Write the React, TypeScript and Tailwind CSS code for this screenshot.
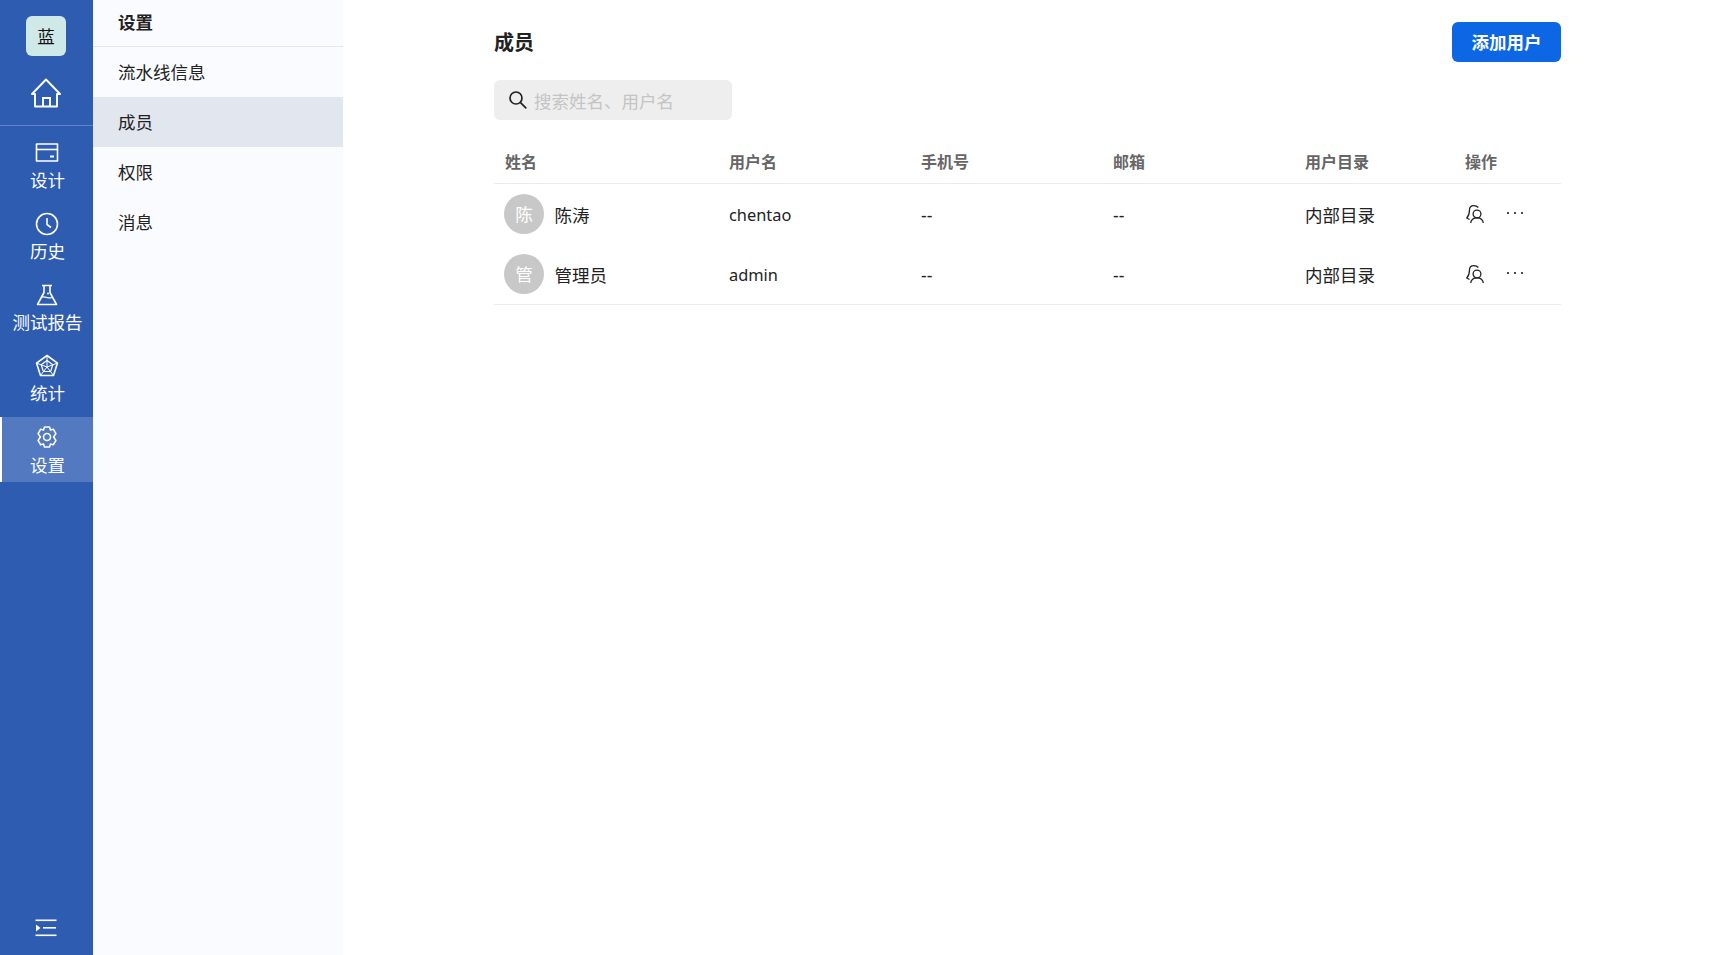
import type { ReactNode } from "react";

const font = { fontFamily: '"Noto Sans", "Noto Sans CJK SC", sans-serif' };

function Icon({ children }: { children: ReactNode }) {
  return (
    <svg
      viewBox="0 0 24 24"
      fill="none"
      stroke="currentColor"
      strokeWidth="1.6"
      strokeLinejoin="round"
      className="-ml-0.5 h-6 w-6"
    >
      {children}
    </svg>
  );
}

const navItems: { label: string; icon: ReactNode; active?: boolean }[] = [
  {
    label: "设计",
    icon: (
      <Icon>
        <rect x="1.500" y="3" width="21" height="17" />
        <path d="M1.500 8.500h21" />
        <path d="M15 15.500h4" strokeWidth="2" />
      </Icon>
    ),
  },
  {
    label: "历史",
    icon: (
      <Icon>
        <circle cx="12" cy="12" r="10.500" />
        <path d="M12 6v6.500l4 3" />
      </Icon>
    ),
  },
  {
    label: "测试报告",
    icon: (
      <Icon>
        <path d="M7 2.500h10M9 2.500v7L2.500 21.500h19L15 9.500v-7" />
        <path d="M6 14.500c4-2 6 1.500 12 0" strokeWidth="1.200" />
        <circle cx="13" cy="10.500" r="1" fill="currentColor" stroke="none" />
      </Icon>
    ),
  },
  {
    label: "统计",
    icon: (
      <Icon>
        <path d="M12 1.500l10.500 7.600-4 12.400h-13l-4-12.400z" />
        <path d="M12 6.500l5.800 4.200-2.200 6.800H8.400l-2.200-6.800z" strokeWidth="1.200" />
        <path d="M12 1.500V13M22.500 9.100L12 13M18.500 21.500L12 13M5.500 21.500L12 13M1.500 9.100L12 13" strokeWidth="1" />
      </Icon>
    ),
  },
  {
    label: "设置",
    active: true,
    icon: (
      <Icon>
        <path d="M9.500 2h5l1 3 2.800-.8 2.600 4.400L18.600 12l2.300 3.400-2.600 4.400-2.800-.8-1 3h-5l-1-3-2.800.8-2.600-4.400L5.400 12 3.100 8.600l2.600-4.400 2.800.8z" />
        <circle cx="12" cy="12" r="3.500" />
      </Icon>
    ),
  },
];

const subItems = ["流水线信息", "成员", "权限", "消息"];

const members = [
  { initial: "陈", name: "陈涛", username: "chentao" },
  { initial: "管", name: "管理员", username: "admin" },
];

function UsersIcon() {
  return (
    <svg viewBox="0 0 18 18" fill="none" stroke="#222" strokeWidth="1.300" className="ml-px h-[18px] w-[18px]">
      <circle cx="11" cy="9" r="3.900" />
      <path d="M4.700 18c.4-3.300 3-5.200 6.300-5.200s5.900 1.900 6.300 5.200" />
      <path d="M12.300 2.500C11.300 1.300 9.600.700 7.800.700 5.500.700 3.500 2.200 3.500 5c0 3-.5 5.500-2.700 8l2.700 1.500" />
    </svg>
  );
}

export default function App() {
  return (
    <div className="flex h-[955px] w-full overflow-hidden bg-white text-[17.5px] text-[#222]" style={font}>
      <aside className="flex w-[93px] shrink-0 flex-col bg-[#2e5cb0] text-white">
        <div className="flex h-[126px] flex-col items-center border-b border-white/25 pt-4">
          <div className="-ml-px flex h-10 w-10 items-center justify-center rounded-md bg-[#cfe9e9] text-[17.5px] text-[#111]">
            蓝
          </div>
          <svg viewBox="0 0 30 30" fill="none" stroke="currentColor" strokeWidth="1.900" className="mt-[22px] -ml-px h-[30px] w-[30px]">
            <path d="M1 16L15 1.500 29 16h-3v12.500H4V16z" strokeLinejoin="round" />
            <path d="M12 28.500V20h7v8.500" />
          </svg>
        </div>
        <nav className="mt-[7px] flex flex-col gap-[6px]">
          {navItems.map((item) => (
            <div
              key={item.label}
              className={`flex h-[65px] flex-col items-center border-l-2 pt-[8px] ${
                item.active ? "border-white bg-[#537ac0]" : "border-transparent"
              }`}
            >
              {item.icon}
              <span className={`text-[17.5px] leading-[24px] whitespace-nowrap ${item.active ? "mt-[4px]" : "mt-[3px]"}`}>
                {item.label}
              </span>
            </div>
          ))}
        </nav>
        <div className="mt-auto flex h-[50px] items-start justify-center pt-[14px]">
          <svg viewBox="0 0 22 18" fill="currentColor" className="-ml-0.5 h-[18px] w-[22px]">
            <rect x="0.500" y="0.500" width="21" height="1.600" />
            <rect x="8" y="8" width="13" height="1.600" />
            <rect x="0.500" y="15.500" width="21" height="1.600" />
            <path d="M1 5.500l4.500 3.500L1 12.500z" />
          </svg>
        </div>
      </aside>

      <div className="w-[250px] shrink-0 bg-[#fafbfe]">
        <div className="flex h-[47px] items-center border-b border-[#e4e6ea] pb-[2px] pl-[25px] font-semibold">设置</div>
        {subItems.map((item) => (
          <div
            key={item}
            className={`flex h-[50px] items-center pl-[25px] ${item === "成员" ? "bg-[#e2e6ef]" : ""}`}
          >
            {item}
          </div>
        ))}
      </div>

      <main className="min-w-0 flex-1 pt-[22px] pr-[150px] pl-[151px]">
        <div className="flex h-10 items-center justify-between">
          <h1 className="pt-[2px] text-[20px] font-bold text-[#222]">成员</h1>
          <button className="h-10 w-[109px] rounded-md bg-[#0d66e4] font-bold text-white">添加用户</button>
        </div>

        <div className="mt-[18px] flex h-10 w-[238px] items-center rounded-md bg-[#eeeeee] pl-[15px]">
          <svg viewBox="0 0 18 18" fill="none" stroke="#222" strokeWidth="1.700" className="h-[18px] w-[18px]">
            <circle cx="7" cy="7" r="6" />
            <path d="M11.300 11.300l6 6" />
          </svg>
          <span className="ml-[7px] pt-[2px] text-[#c4c4c4]">搜索姓名、用户名</span>
        </div>

        <table className="mt-5 w-full table-fixed border-separate border-spacing-0">
          <thead>
            <tr className="text-left text-[16px] text-[#666]">
              <th className="h-[44px] w-[235px] border-b border-[#ececec] pl-[11px] font-bold">姓名</th>
              <th className="w-[192px] border-b border-[#ececec] font-bold">用户名</th>
              <th className="w-[192px] border-b border-[#ececec] font-bold">手机号</th>
              <th className="w-[192px] border-b border-[#ececec] font-bold">邮箱</th>
              <th className="w-[160px] border-b border-[#ececec] font-bold">用户目录</th>
              <th className="border-b border-[#ececec] font-bold">操作</th>
            </tr>
          </thead>
          <tbody>
            {members.map((m, i) => {
              const last = i === members.length - 1;
              const border = last ? "border-b border-[#ececec]" : "";
              return (
                <tr key={m.username} className={last ? "h-[61px]" : "h-[60px]"}>
                  <td className={`pl-[10px] ${border}`}>
                    <div className="flex items-center gap-[10.5px]">
                      <span className="flex h-10 w-10 items-center justify-center rounded-full bg-[#c8c8c8] text-white">
                        {m.initial}
                      </span>
                      <span className="pt-[2px]">{m.name}</span>
                    </div>
                  </td>
                  <td className={`pt-[2px] text-[16.4px] ${border}`}>{m.username}</td>
                  <td className={`pt-[2px] ${border}`}>--</td>
                  <td className={`pt-[2px] ${border}`}>--</td>
                  <td className={`pt-[2px] ${border}`}>内部目录</td>
                  <td className={border}>
                    <div className="flex items-center gap-[22px]">
                      <UsersIcon />
                      <svg viewBox="0 0 18 4" fill="#222" className="mb-[2px] h-1 w-[18px]">
                        <circle cx="2" cy="2" r="1.100" />
                        <circle cx="9" cy="2" r="1.100" />
                        <circle cx="16" cy="2" r="1.100" />
                      </svg>
                    </div>
                  </td>
                </tr>
              );
            })}
          </tbody>
        </table>
      </main>
    </div>
  );
}
